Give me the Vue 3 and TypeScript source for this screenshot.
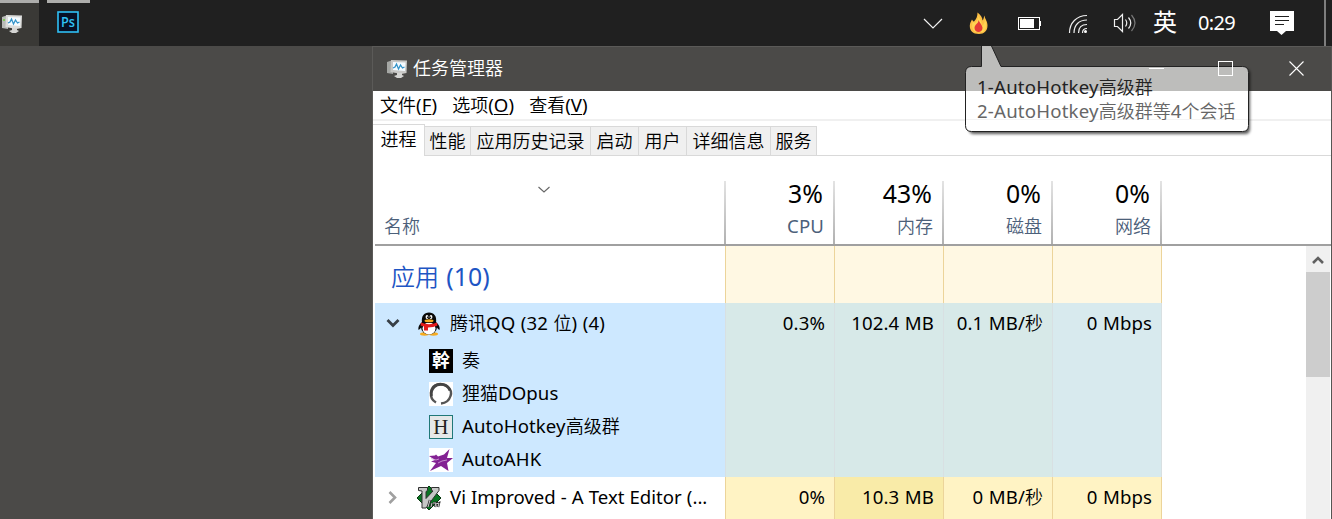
<script setup lang="ts">
import { h } from 'vue'

// Splits a label into Latin and Han runs so each script gets its own metrics.
const Label = (props: { text: string }) =>
  h(
    'span',
    { class: 'label' },
    (props.text.match(/[\u3400-\u9fff]+|[^\u3400-\u9fff]+/g) ?? []).map((run) =>
      h('span', { class: /[\u3400-\u9fff]/.test(run) ? 'han' : 'lat' }, run),
    ),
  )
Label.props = ['text']

const menus = [
  { name: '文件', key: 'F' },
  { name: '选项', key: 'O' },
  { name: '查看', key: 'V' },
]
const tabs = [
  { name: '性能', cls: 'w46' },
  { name: '应用历史记录', cls: 'w120' },
  { name: '启动', cls: 'w48' },
  { name: '用户', cls: 'w48' },
  { name: '详细信息', cls: 'w84' },
  { name: '服务', cls: 'w46' },
]
const columns = [
  { total: '3%', name: 'CPU', qq: '0.3%', vi: '0%' },
  { total: '43%', name: '内存', qq: '102.4 MB', vi: '10.3 MB' },
  { total: '0%', name: '磁盘', qq: '0.1 MB/秒', vi: '0 MB/秒' },
  { total: '0%', name: '网络', qq: '0 Mbps', vi: '0 Mbps' },
]
const chats = [
  { icon: 'gan', name: '奏' },
  { icon: 'ring', name: '狸猫DOpus' },
  { icon: 'ahk', name: 'AutoHotkey高级群' },
  { icon: 'star', name: 'AutoAHK' },
]
</script>

<template>
  <div class="screen">
    <header class="taskbar">
      <div class="task active">
        <svg class="monitor" width="22" height="20" viewBox="0 0 22 20">
          <path d="M1 3l6-2v14l-6-1z" fill="#b9bbb8" /><path d="M2 6h2" stroke="#6fd03a" stroke-width="1.5" />
          <path d="M5 1l16 .5-.5 12.500-5 1-11-2z" fill="#dcdcda" /><path d="M7 3l12.500.5-.5 8.500-12-1z" fill="#f5fbff" />
          <path d="M7 9l2-1 1.500-3 2 5 2-4 2 3 2-1" fill="none" stroke="#3293c9" stroke-width="1.300" />
          <path d="M11 14h5v2l2 1-3 2h-4l-3-2 3-1z" fill="#d5d5d3" />
        </svg>
      </div>
      <div class="task photoshop">
        <svg width="22" height="22" viewBox="0 0 22 22">
          <rect x="1" y="1" width="20" height="20" fill="#071026" stroke="#2fc0f5" stroke-width="1.600" />
          <text x="4" y="15.500" class="ps" textLength="14" lengthAdjust="spacingAndGlyphs">Ps</text>
        </svg>
      </div>
      <div class="tray">
        <svg width="432" height="46" viewBox="900 0 432 46">
          <path d="M924 19l9 9 9-9" fill="none" stroke="#f2f2f2" stroke-width="1.200" />
          <path d="M977.500 12.500C981 15 982.500 18 982.500 20.500 984 19 983.800 16.500 984.500 15.500 984.800 19 987.500 21 987.500 25.500 987.500 31 984 34 979 34 973 34 969.500 30.500 969.800 25.500 970 23 971 21.500 972 19.500 972.800 21 973.500 21.500 974 21.500 976.500 19 977.500 16 977.500 12.500z" fill="#fdbf44" />
          <path d="M978 14c1 5 4 7 4 12 2-1 3-5 3-7 2 5 2 10-2 13h-8c-4-4-3-8-2-10l2 1c3-3 4-6 3-9z" fill="#ffd452" />
          <path d="M978.500 20c1 3 4 5 4 8 0 2.500-2 4-4 4s-4-1.500-4-4c0-2 1-3 2-4 1-.8 2-2 2-4z" fill="#e53c37" />
          <rect x="1018.500" y="17.500" width="21" height="12" fill="none" stroke="#fff" /><rect x="1020" y="19" width="14" height="9" fill="#fff" /><path d="M1040.500 21v5" stroke="#fff" />
          <g fill="none" stroke="#f0f0f0" stroke-width="1.200">
            <path d="M1069.500 33c0-10 7-17.500 17.500-17.500M1074 33c0-8 5-13 13-13M1078.500 33c0-5.500 3-8.500 8.500-8.500M1082.500 33c0-3 1.500-4.500 4.500-4.500" />
            <path d="M1114.500 19.500h3l5-5v17l-5-5h-3z" />
            <path d="M1125.500 19.500q2.500 3.500 0 7M1128.500 17.500q4.500 5.500 0 11" /><path d="M1131.500 15q7 8 0 16" stroke="#777" />
          </g>
          <circle cx="1085.500" cy="31.500" r="1.500" fill="#fff" />
          <path d="M1270 11h24v20h-8l-4.500 4-4.500-4h-7z" fill="#fff" /><path d="M1275 16.500h14M1275 20.500h14M1275 24.500h9" stroke="#202020" />
          <path d="M1325 0v46" stroke="#7e7e7e" stroke-width="2" />
        </svg>
        <span class="ime">英</span>
        <span class="clock">0:29</span>
      </div>
    </header>

    <main class="window">
      <div class="titlebar">
        <svg class="monitor" width="22" height="20" viewBox="0 0 22 20">
          <path d="M1 3l6-2v14l-6-1z" fill="#a5a7a4" />
          <path d="M5 1l16 .5-.5 12.500-5 1-11-2z" fill="#c8c8c6" /><path d="M7 3l12.500.5-.5 8.500-12-1z" fill="#f5fbff" />
          <path d="M7 9l2-1 1.500-3 2 5 2-4 2 3 2-1" fill="none" stroke="#3293c9" stroke-width="1.300" />
          <path d="M11 14h5v2l2 1-3 2h-4l-3-2 3-1z" fill="#d5d5d3" />
        </svg>
        <Label text="任务管理器" />
      </div>
      <nav class="menubar">
        <span v-for="m in menus" :key="m.key" class="menu"><Label :text="m.name + '('" /><u class="lat">{{ m.key }}</u><Label text=")" /></span>
      </nav>
      <div class="tabs">
        <div class="tab current"><Label text="进程" /></div>
        <div v-for="t in tabs" :key="t.name" class="tab" :class="t.cls"><Label :text="t.name" /></div>
        <div class="rest"></div>
      </div>

      <div class="heads">
        <div class="head-name">
          <svg class="sort" width="12" height="8" viewBox="0 0 12 8"><path d="M.5 1l5.500 5 5.500-5" fill="none" stroke="#666" stroke-width="1.100" /></svg>
          <Label text="名称" />
        </div>
        <div v-for="c in columns" :key="c.name" class="head">
          <div class="total"><Label :text="c.total" /></div>
          <div class="caption"><Label :text="c.name" /></div>
        </div>
      </div>

      <div class="body">
        <div class="rows">
          <div class="row group">
            <div class="name"><Label text="应用 (10)" /></div>
            <div v-for="c in columns" :key="c.name" class="cell"></div>
          </div>
          <div class="row selected">
            <div class="name">
              <div class="process">
                <svg class="arrow" width="14" height="10" viewBox="0 0 14 10"><path d="M1.500 1l5.500 5.500L12.500 1" fill="none" stroke="#383f46" stroke-width="2.800" /></svg>
                <svg class="app-icon" width="24" height="24" viewBox="0 0 24 24">
                  <path d="M5 10q-4.500 4-3.500 8 1 0 3-3M19 10q4.500 4 3.500 8-1 0-3-3" fill="#080808" />
                  <ellipse cx="7.500" cy="22" rx="4.500" ry="1.700" fill="#f6ab20" /><ellipse cx="16.500" cy="22" rx="4.500" ry="1.700" fill="#f6ab20" />
                  <ellipse cx="12" cy="15" rx="8" ry="7.500" fill="#080808" /><ellipse cx="12" cy="16.500" rx="6.500" ry="6" fill="#fff" />
                  <path d="M5 11C4 4 7 .5 12 .5S20 4 19 11z" fill="#080808" />
                  <ellipse cx="10" cy="5" rx="1.400" ry="1.900" fill="#fff" /><ellipse cx="14" cy="5" rx="1.400" ry="1.900" fill="#fff" /><circle cx="10.500" cy="5.200" r=".7" /><circle cx="13.500" cy="5.200" r=".7" />
                  <ellipse cx="12" cy="8.800" rx="4.500" ry="1.500" fill="#f6ab20" />
                  <path d="M4 10.500q8 3.500 16 0l.5 3q-4 2-9.500 2v3H7v-4l-3.500-1z" fill="#e41b1b" />
                </svg>
                <Label text="腾讯QQ (32 位) (4)" />
              </div>
              <div v-for="c in chats" :key="c.name" class="chat">
                <svg width="24" height="24" viewBox="0 0 24 24">
                  <template v-if="c.icon === 'gan'"><rect width="24" height="24" fill="#000" /><text x="3" y="17.500" class="gan">幹</text></template>
                  <template v-else-if="c.icon === 'ring'">
                    <rect width="24" height="24" fill="#fff" /><path d="M7 20.500C-1 16 1 4 9 2.500S24 7 21.500 14C20 19 17 21 12 21.500" fill="none" stroke="#555" stroke-width="2.400" /><path d="M2.500 14C1 7 7 1 14 2.500q5 1 7 6" fill="none" stroke="#444" stroke-width="2.800" />
                  </template>
                  <template v-else-if="c.icon === 'ahk'"><rect x=".5" y=".5" width="23" height="23" fill="#e5e8e8" stroke="#207878" /><text x="4.300" y="19" class="h">H</text></template>
                  <template v-else>
                    <rect width="24" height="24" fill="#fff" /><path d="M0 8l6-.5 1-1 2 2 6-2 5.500-5.500-2.500 9 6 0-6 5 1.500 8-7.500-5L1 23l6-8-5-1.500 4-1.500z" fill="#832193" /><path d="M2 10.500l5 1.500 3-1M9 15l4-2 5-1" stroke="#d3a6da" fill="none" stroke-width=".8" />
                  </template>
                </svg>
                <Label :text="c.name" />
              </div>
            </div>
            <div v-for="c in columns" :key="c.name" class="cell"><Label :text="c.qq" /></div>
          </div>
          <div class="row vim">
            <div class="name">
              <div class="process">
                <svg class="arrow" width="14" height="14" viewBox="0 0 14 14"><path d="M3.500 1L9 6.500 3.500 12" fill="none" stroke="#a0a0a0" stroke-width="2.600" /></svg>
                <svg class="app-icon" width="24" height="24" viewBox="0 0 24 24">
                  <path d="M12 0l12 12-12 12L0 12z" fill="#087421" stroke="#06350e" />
                  <path d="M1.500 1.500h9v3L9 5.500v7L16 5l-1.500-.5v-3H22v3L9 22H5V5L1.500 4.500z" fill="#c6c7c6" stroke="#303030" />
                  <path d="M13 14l-2 7m4-4l-1 4m2-4l3 0-1 4m1-3l3-1-1 4" fill="none" stroke="#222" stroke-width="2.400" /><path d="M13 14l-2 7m4-4l-1 4m2-4l3 0-1 4m1-3l3-1-1 4" fill="none" stroke="#ccc" />
                </svg>
                <Label class="long" text="Vi Improved - A Text Editor (..." />
              </div>
            </div>
            <div v-for="c in columns" :key="c.name" class="cell"><Label :text="c.vi" /></div>
          </div>
        </div>
        <div class="scrollbar">
          <div class="up"><svg width="12" height="10" viewBox="0 0 12 10"><path d="M1 8l5-5 5 5" fill="none" stroke="#606060" stroke-width="2.600" /></svg></div>
          <div class="thumb"></div>
        </div>
      </div>
    </main>

    <div class="balloon">
      <svg width="290" height="92" viewBox="0 0 290 92">
        <path class="shadow" d="M11 23H282q5 0 5 5V83q0 5-5 5H11q-5 0-5-5V28q0-5 5-5z" />
        <path d="M18.500 0V20.500H8.500q-6 0-6 6V79.500q0 6 6 6H279.500q6 0 6-6V26.500q0-6-6-6H38L28.500 0z" fill="#bdbdbb" />
        <path d="M2.500 45H285.500V79.500q0 6-6 6H8.500q-6 0-6-6z" fill="#fff" />
        <path d="M3 73.500h282" stroke="#f4f4f4" />
        <path d="M18.500 0V20.500H8.500q-6 0-6 6V79.500q0 6 6 6H279.500q6 0 6-6V26.500q0-6-6-6H38L28.500 0" fill="none" stroke="#222" />
      </svg>
      <div class="message first"><Label text="1-AutoHotkey高级群" /></div>
      <div class="message second"><Label text="2-AutoHotkey高级群等4个会话" /></div>
    </div>
    <svg class="controls" width="160" height="30" viewBox="0 0 160 30">
      <path d="M1 13.500h15" stroke="#fff" /><rect x="70.500" y="6.500" width="14" height="14" fill="none" stroke="#fff" /><path d="M141.500 6.500l14 14m0-14l-14 14" stroke="#fff" stroke-width="1.100" />
    </svg>
  </div>
</template>

<style>
body { overflow: hidden; }
.label { white-space: pre; }
.han { font-family: "Noto Sans CJK SC", sans-serif; font-weight: 350; line-height: 0; }
.lat { font-family: "Noto Sans", sans-serif; font-size: 1.035em; line-height: 0; letter-spacing: .1px; word-spacing: .6px; }
.long .lat { letter-spacing: 0; word-spacing: .2px; }
.message .lat { letter-spacing: .2px; }
.process .label, .chat .label, .titlebar .label { margin-bottom: 2px; }
</style>

<style scoped>
.screen { position: relative; width: 1332px; height: 519px; overflow: hidden; background: #4b4a48; font: 18px/24px "Noto Sans", "Noto Sans CJK SC", sans-serif; color: #000; display: flex; flex-direction: column; }
svg { display: block; flex: none; overflow: visible; }
.taskbar { height: 46px; flex: none; background: #202020; display: flex; }
.task { box-sizing: border-box; border-top: 3px solid #adadab; height: 46px; }
.active { width: 39px; background: #3a3936; padding: 11px 0 0 1px; }
.photoshop { width: 43px; margin-left: 8px; padding: 8px 0 0 10px; }
.ps { font: 600 14px "Open Sans", sans-serif; fill: #2fc0f5; }
.tray { position: relative; margin-left: auto; width: 432px; color: #fff; }
.ime, .clock { position: absolute; top: 8px; line-height: 30px; }
.ime { left: 253px; top: 7px; font-size: 24px; font-weight: 400; }
.clock { left: 298px; font-size: 20px; letter-spacing: -.7px; }
.window { box-sizing: border-box; width: 960px; height: 473px; margin-left: 372px; border-left: 1px solid #5b5a58; border-right: 1px solid #565553; background: #fff; }
.titlebar { box-sizing: border-box; height: 45px; border-top: 1px solid #5b5a58; background: #4b4a48; color: #fff; display: flex; align-items: center; gap: 5px; padding-left: 13px; }
.menubar { box-sizing: border-box; height: 30px; border-bottom: 2px solid #f0f0f0; display: flex; gap: 15px; padding: 2px 0 0 7px; }
.menu { white-space: pre; }
.menu u { text-decoration-thickness: 1px; text-underline-offset: 2px; }
.tabs { height: 35px; display: flex; align-items: flex-end; }
.tab { box-sizing: border-box; height: 30px; border: 1px solid #d9d9d9; border-left: 0; background: #f0f0f0; text-align: center; line-height: 28px; white-space: nowrap; }
.current { width: 52px; height: 32px; background: #fff; border-bottom: 0; line-height: 29px; }
.w46 { width: 46px; } .w120 { width: 120px; } .w48 { width: 48px; } .w84 { width: 84px; }
.rest { flex: 1; height: 1px; background: #d9d9d9; }
.heads { box-sizing: border-box; height: 90px; margin-left: 2px; padding-top: 25px; border-bottom: 2px solid #a0a0a0; display: flex; }
.head-name, .head { box-sizing: border-box; height: 63px; border-right: 2px solid; border-image: linear-gradient(#e4e4e4, #b0b0b0) 1; }
.head-name { width: 351px; color: #4c607a; padding: 5px 0 0 9px; }
.sort { margin: 0 0 20px 154px; }
.head { width: 109px; text-align: right; }
.total { font-size: 24px; line-height: 26px; padding-right: 10px; }
.caption { color: #4c607a; margin-top: 7px; padding-right: 9px; }
.body { height: 273px; margin-left: 2px; display: flex; justify-content: space-between; }
.row { display: flex; }
.name { box-sizing: border-box; width: 350px; }
.cell { box-sizing: border-box; width: 109px; border-left: 1px solid #ecd49a; text-align: right; padding: 8px 9px 0 0; white-space: nowrap; }
.cell:last-child { width: 110px; border-right: 1px solid #ecd49a; }
.group { height: 57px; }
.group .name { font-size: 24px; line-height: 61px; padding-left: 16px; color: #1e55c4; }
.group .cell { background: #fff8e3; }
.selected { height: 174px; background: #cde8ff; width: 787px; }
.selected .cell { background: #d7e9e8; border-color: #d8e0e2; }
.selected .cell:last-child { background: #d8eaee; }
.vim { height: 42px; }
.vim .cell { background: #fff3c4; }
.vim .cell:nth-child(3) { background: #f9eba8; }
.process { display: flex; align-items: center; height: 41px; padding-left: 11px; }
.arrow { margin-right: 17px; }
.app-icon { margin-right: 9px; }
.chat { height: 33px; padding-left: 54px; display: flex; align-items: center; gap: 9px; }
.gan { font: 700 18px "Noto Sans CJK TC", sans-serif; fill: #fff; }
.h { font: 21px "Liberation Serif", serif; fill: #222; }
.scrollbar { width: 24px; margin-right: 1px; background: #f0f0f0; }
.up { height: 26px; display: flex; align-items: center; justify-content: center; padding-top: 2px; box-sizing: border-box; }
.thumb { height: 105px; background: #cdcdcd; }
.balloon { position: absolute; left: 963px; top: 46px; width: 290px; height: 92px; }
.shadow { fill: #000; opacity: .65; filter: blur(1.5px); }
.message { position: absolute; left: 14px; white-space: nowrap; }
.first { top: 29px; color: #222; }
.second { top: 53px; color: #666; }
.controls { position: absolute; left: 1148px; top: 55px; }
</style>
